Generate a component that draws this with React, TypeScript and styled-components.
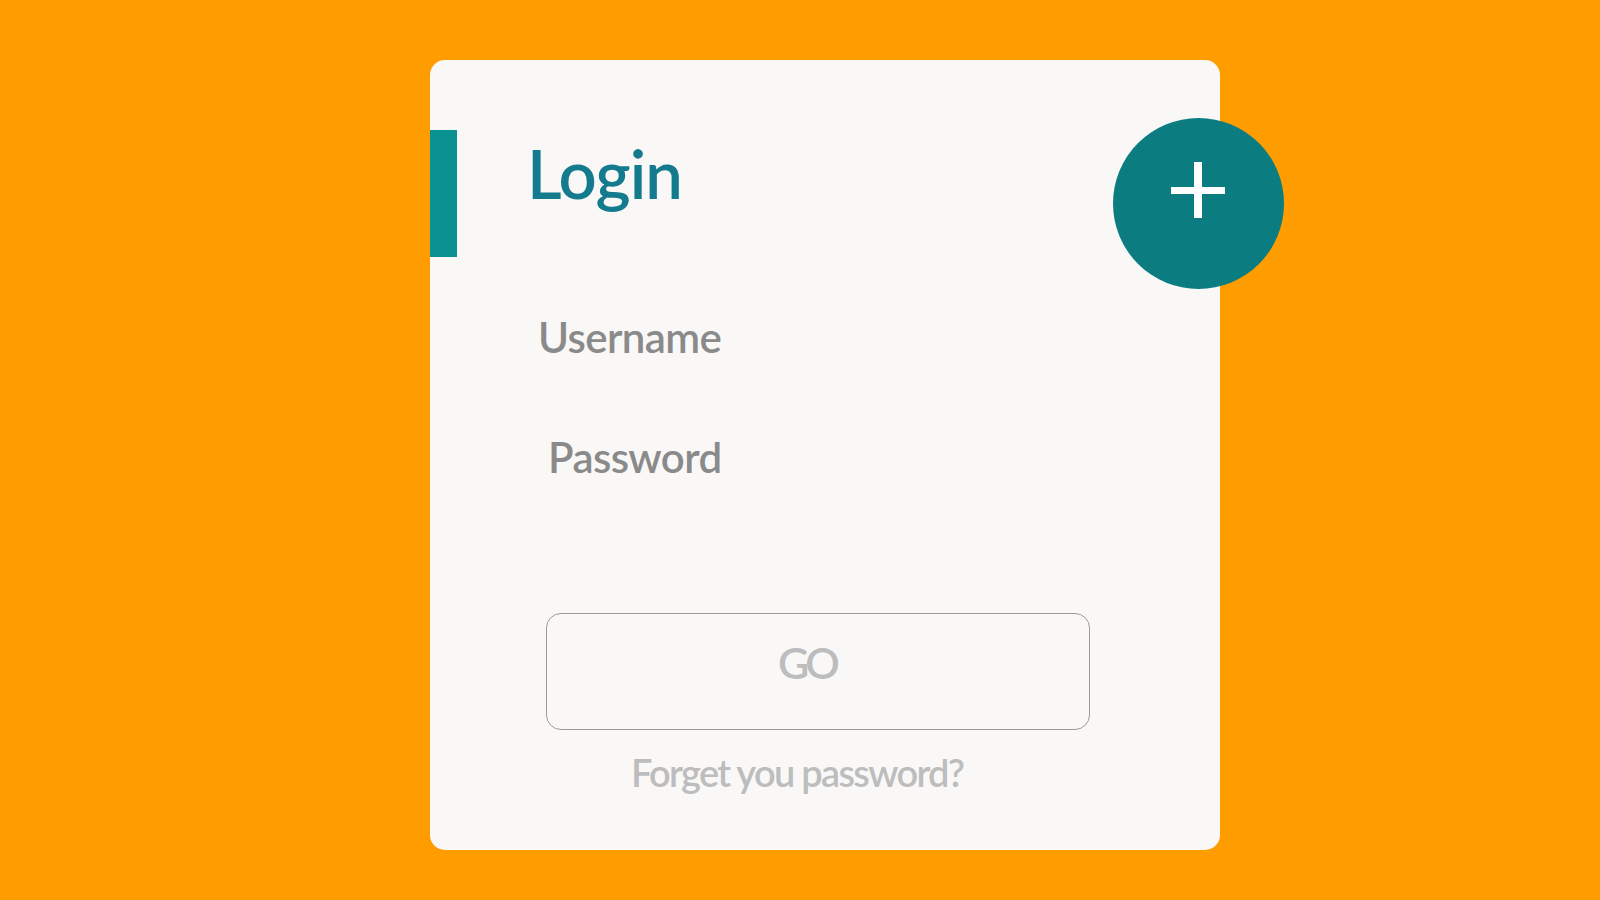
import React from "react";
import styled, { createGlobalStyle } from "styled-components";

const GlobalStyle = createGlobalStyle`
  html, body {
    margin: 0;
    padding: 0;
    background: #ff9c00;
  }
  body {
    font-family: Lato, "Open Sans", sans-serif;
  }
`;

const Page = styled.div`
  width: 1600px;
  height: 900px;
  display: flex;
  justify-content: flex-start;
  align-items: flex-start;
  padding: 60px 0 0 430px;
  box-sizing: border-box;
`;

const Card = styled.div`
  position: relative;
  width: 790px;
  height: 790px;
  box-sizing: border-box;
  padding-top: 70px;
  background: #f9f8f7;
  border-radius: 15px;
  display: flex;
  flex-direction: column;
`;

const Header = styled.div`
  display: flex;
  align-items: flex-start;
  height: 127px;
`;

const Marker = styled.div`
  width: 27px;
  height: 100%;
  background: #0a9191;
`;

const Title = styled.h1`
  margin: 10px 0 0 70px;
  font-size: 67px;
  line-height: 1;
  font-weight: 600;
  color: #137b8d;
  letter-spacing: -1px;
`;

const Label = styled.div<{ $indent: number; $gap: number }>`
  margin: ${(p) => p.$gap}px 0 0 ${(p) => p.$indent}px;
  font-size: 42px;
  line-height: 1;
  font-weight: 600;
  color: #8a8a8a;
  letter-spacing: -0.6px;
`;

const GoButton = styled.button`
  margin: 135px 0 0 116px;
  width: 544px;
  height: 117px;
  box-sizing: border-box;
  border: 1px solid #9a9a9a;
  border-radius: 15px;
  background: transparent;
  display: flex;
  align-items: center;
  justify-content: center;
  padding: 0 22px 18px 0;
  font-family: inherit;
  font-size: 43px;
  line-height: 1;
  font-weight: 600;
  color: #bdbdbd;
  letter-spacing: -4px;
`;

const Forgot = styled.a`
  align-self: flex-start;
  margin: 23px 0 0 201px;
  font-size: 38px;
  line-height: 1;
  font-weight: 600;
  color: #bdbdbd;
  letter-spacing: -1.7px;
  text-decoration: none;
`;

const AddButton = styled.button`
  position: absolute;
  top: 58px;
  left: 683px;
  width: 171px;
  height: 171px;
  border: none;
  border-radius: 50%;
  background: #0b7d80;
  display: flex;
  justify-content: center;
  padding-top: 44px;
  box-sizing: border-box;
`;

const Plus = () => (
  <svg width="56" height="56" viewBox="0 0 56 56">
    <rect x="0" y="25" width="54" height="7" fill="#fff" />
    <rect x="23" y="0" width="8" height="56" fill="#fff" />
  </svg>
);

export default function App() {
  return (
    <>
      <GlobalStyle />
      <Page>
        <Card>
          <Header>
            <Marker />
            <Title>Login</Title>
          </Header>
          <Label $indent={108} $gap={59}>Username</Label>
          <Label $indent={118} $gap={78}>Password</Label>
          <GoButton>GO</GoButton>
          <Forgot href="#">Forget you password?</Forgot>
          <AddButton aria-label="Add">
            <Plus />
          </AddButton>
        </Card>
      </Page>
    </>
  );
}
